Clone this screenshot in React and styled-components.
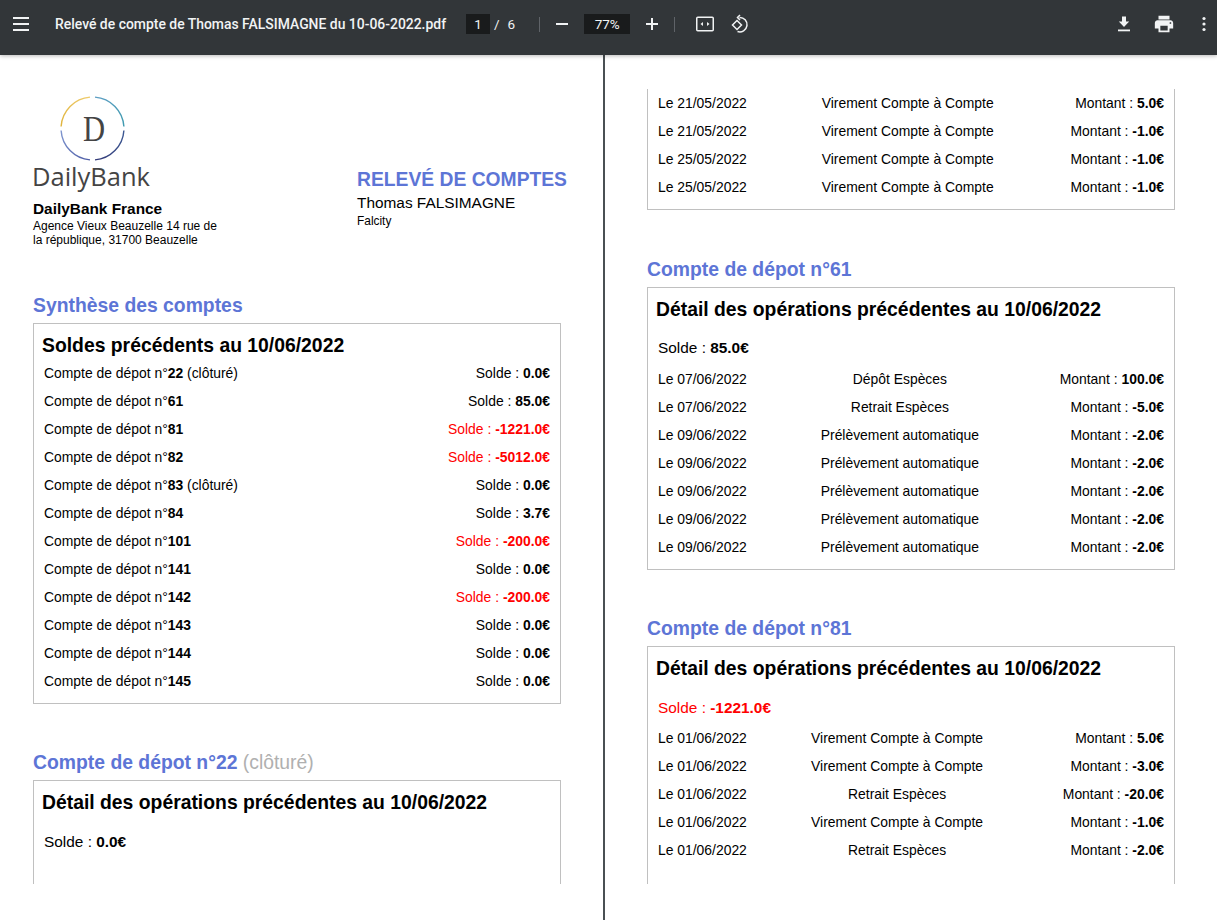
import React from 'react';
import styled, { createGlobalStyle } from 'styled-components';

const GlobalStyle = createGlobalStyle`
    html, body {
        margin: 0;
        padding: 0;
        height: 100%;
        background: #ffffff;
    }
    body {
        font-family: "Liberation Sans", Arial, sans-serif;
        color: #000000;
        overflow: hidden;
    }
`;

const Viewer = styled.div`
    width: 1217px;
    height: 920px;
    display: flex;
    flex-direction: column;
    overflow: hidden;
    background: #ffffff;
`;

const Toolbar = styled.header`
    height: 55px;
    box-sizing: border-box;
    flex: none;
    background: #323639;
    color: #f1f3f4;
    display: flex;
    align-items: center;
    box-shadow: 0 1px 4px rgba(0, 0, 0, 0.28);
    position: relative;
    z-index: 2;
    padding: 0 1px 7px 9px;
`;

const IconButton = styled.div`
    width: 24px;
    height: 32px;
    margin-left: ${(props) => props.left || 0}px;
    flex: none;
    display: flex;
    align-items: center;
    justify-content: center;
    color: #f1f3f4;
`;

const FileName = styled.div`
    margin-left: 22px;
    width: 411px;
    flex: none;
    font-family: Roboto, sans-serif;
    font-size: 13.93px;
    font-weight: 500;
    white-space: nowrap;
`;

const PageInput = styled.div`
    width: 24px;
    height: 20px;
    background: #191b1c;
    font-family: Roboto, sans-serif;
    font-size: 13.5px;
    line-height: 20px;
    text-align: center;
    flex: none;
`;

const Slash = styled.span`
    font-family: Roboto, sans-serif;
    font-size: 13.5px;
    margin-left: 4px;
    flex: none;
`;

const PageCount = styled.span`
    font-family: Roboto, sans-serif;
    font-size: 13.5px;
    margin-left: 8px;
    flex: none;
`;

const Separator = styled.div`
    width: 1px;
    height: 15px;
    background: #5f6368;
    flex: none;
    margin-left: ${(props) => props.left}px;
`;

const ZoomInput = styled.div`
    width: 46px;
    height: 20px;
    margin-left: 10px;
    background: #191b1c;
    font-family: Roboto, sans-serif;
    font-size: 13.5px;
    line-height: 20px;
    text-align: center;
    flex: none;
`;

const Spacer = styled.div`
    flex: 1;
`;

const Pages = styled.main`
    flex: 1;
    display: grid;
    grid-template-columns: 603px 2px 612px;
    min-height: 0;
`;

const Divider = styled.div`
    background: #4a5053;
`;

const Sheet = styled.section`
    height: ${(props) => 829 - props.top}px;
    overflow: hidden;
    padding: ${(props) => props.top}px 42px 0 ${(props) => props.left}px;
`;

const Head = styled.div`
    display: flex;
    justify-content: space-between;
    height: 196px;
`;

const BankBlock = styled.div`
    width: 188px;
`;

const LogoWrap = styled.div`
    width: 120px;
    height: 99px;
    position: relative;
`;

const LogoRing = styled.svg`
    position: absolute;
    left: 0;
    top: 0;
`;

const LogoText = styled.div`
    position: absolute;
    left: -1px;
    top: 62px;
    font-family: "Open Sans", sans-serif;
    font-size: 25.5px;
    line-height: 36px;
    color: #444444;
`;

const LogoLetter = styled.div`
    position: absolute;
    left: 50px;
    top: 15px;
    font-family: "Liberation Serif", serif;
    font-size: 36px;
    line-height: 36px;
    color: #444444;
    transform: scaleX(0.85);
    transform-origin: left center;
`;

const BankName = styled.div`
    font-size: 15.4px;
    font-weight: 700;
    line-height: 16px;
    margin-top: 6px;
`;

const BankAddress = styled.div`
    font-size: 12px;
    line-height: 14px;
    margin-top: 2px;
`;

const ClientBlock = styled.div`
    width: 204px;
    padding-top: 72px;
`;

const ReportTitle = styled.div`
    color: #5d75d6;
    font-size: 19.3px;
    font-weight: 700;
    line-height: 24px;
    white-space: nowrap;
`;

const ClientName = styled.div`
    font-size: 15.4px;
    line-height: 22px;
`;

const ClientCity = styled.div`
    font-size: 11.9px;
    line-height: 14px;
`;

const SectionTitle = styled.h2`
    margin: ${(props) => props.top}px 0 0 0;
    color: #5d75d6;
    font-size: 19.35px;
    font-weight: 700;
    line-height: 26px;
    height: 31px;
    white-space: nowrap;
`;

const Closed = styled.span`
    color: #b0b0b0;
    font-weight: 400;
`;

const Card = styled.div`
    border: 1px solid #c0c0c0;
    border-top: ${(props) => (props.cut ? 'none' : '1px solid #c0c0c0')};
    padding: ${(props) => (props.cut ? '0' : '8px')} 10px ${(props) => (props.open ? 80 : 8)}px 8px;
    width: 528px;
    box-sizing: border-box;
`;

const CardTitle = styled.div`
    font-size: 19.35px;
    font-weight: 700;
    line-height: 26px;
    margin-bottom: 1px;
    white-space: nowrap;
`;

const Balance = styled.div`
    font-size: 15.4px;
    line-height: 20px;
    margin: ${(props) => props.top || 17}px 0 ${(props) => props.bottom || 6}px 2px;
    color: ${(props) => (props.negative ? '#ff0000' : '#000000')};
`;

const Table = styled.table`
    width: calc(100% - 2px);
    margin: ${(props) => (props.cut ? -2 : 0)}px 0 0 2px;
    border-collapse: collapse;
    font-size: 13.9px;
`;

const Row = styled.tr`
    height: 28px;
`;

const Cell = styled.td`
    padding: 0 0 0 ${(props) => props.pad || 0}px;
    text-align: ${(props) => props.align || 'left'};
    white-space: nowrap;
    color: ${(props) => (props.negative ? '#ff0000' : '#000000')};
`;

const Burger = () => (
    <svg width="24" height="24" viewBox="0 0 24 24" fill="currentColor">
        <rect x="4" y="5" width="16" height="2" />
        <rect x="4" y="11" width="16" height="2" />
        <rect x="4" y="17" width="16" height="2" />
    </svg>
);

const Minus = () => (
    <svg width="20" height="20" viewBox="0 0 20 20" fill="currentColor">
        <rect x="4" y="9" width="12" height="2" />
    </svg>
);

const Plus = () => (
    <svg width="20" height="20" viewBox="0 0 20 20" fill="currentColor">
        <path d="M9 4h2v5h5v2h-5v5H9v-5H4V9h5z" />
    </svg>
);

const FitWidth = () => (
    <svg width="20" height="20" viewBox="0 0 20 20" fill="none" stroke="currentColor" strokeWidth="1.5">
        <rect x="1.75" y="3.25" width="16.5" height="13.5" rx="1" />
        <path d="M5.5 10L8 8v4zM14.5 10L12 8v4z" fill="currentColor" stroke="none" />
    </svg>
);

const Rotate = () => (
    <svg width="20" height="20" viewBox="0 0 20 20" fill="none" stroke="currentColor" strokeWidth="1.5">
        <path d="M9.5 3.5a7.2 7.2 0 1 1-2 14" />
        <path d="M10 1L7.5 3.5 10 6" />
        <path d="M7 6.5L2.5 11 7 15.5l4.5-4.5z" />
    </svg>
);

const Download = () => (
    <svg width="20" height="20" viewBox="0 0 20 20" fill="currentColor">
        <path d="M8 2.5h4v5h3.2L10 13 4.8 7.5H8z" />
        <rect x="4" y="15.5" width="12" height="1.8" />
    </svg>
);

const Print = () => (
    <svg width="22" height="22" viewBox="0 0 24 24" fill="currentColor">
        <path d="M19 8H5c-1.66 0-3 1.34-3 3v6h4v4h12v-4h4v-6c0-1.66-1.34-3-3-3zm-3 11H8v-5h8v5zm3-7c-.55 0-1-.45-1-1s.45-1 1-1 1 .45 1 1-.45 1-1 1zm-1-9H6v4h12V3z" />
    </svg>
);

const More = () => (
    <svg width="20" height="20" viewBox="0 0 20 20" fill="currentColor">
        <circle cx="10" cy="4.5" r="1.6" />
        <circle cx="10" cy="10" r="1.6" />
        <circle cx="10" cy="15.5" r="1.6" />
    </svg>
);

// arcs of the ring, going round from the top left
const Logo = () => (
    <LogoWrap>
        <LogoRing width="120" height="70" viewBox="0 0 120 70" fill="none" strokeWidth="1.4">
            <defs>
                <linearGradient id="ringTopLeft" x1="0" y1="1" x2="1" y2="0">
                    <stop offset="0" stopColor="#e0b43c" />
                    <stop offset="1" stopColor="#eecb6c" />
                </linearGradient>
                <linearGradient id="ringTopRight" x1="0" y1="0" x2="1" y2="1">
                    <stop offset="0" stopColor="#5f9fc4" />
                    <stop offset="1" stopColor="#3f9aaf" />
                </linearGradient>
                <linearGradient id="ringBottomRight" x1="1" y1="0" x2="0" y2="1">
                    <stop offset="0" stopColor="#3d5a94" />
                    <stop offset="1" stopColor="#333a78" />
                </linearGradient>
                <linearGradient id="ringBottomLeft" x1="1" y1="1" x2="0" y2="0">
                    <stop offset="0" stopColor="#4d5ca6" />
                    <stop offset="1" stopColor="#7f96cf" />
                </linearGradient>
            </defs>
            <path d="M28.1 30.5 A31.5 31.5 0 0 1 57 1.1" stroke="url(#ringTopLeft)" />
            <path d="M62 1.1 A31.5 31.5 0 0 1 90.9 30.5" stroke="url(#ringTopRight)" />
            <path d="M90.9 34.5 A31.5 31.5 0 0 1 62 63.9" stroke="url(#ringBottomRight)" />
            <path d="M57 63.9 A31.5 31.5 0 0 1 28.1 34.5" stroke="url(#ringBottomLeft)" />
        </LogoRing>
        <LogoLetter>D</LogoLetter>
        <LogoText>DailyBank</LogoText>
    </LogoWrap>
);

const summary = [
    { n: '22', solde: '0.0', closed: true },
    { n: '61', solde: '85.0' },
    { n: '81', solde: '-1221.0', negative: true },
    { n: '82', solde: '-5012.0', negative: true },
    { n: '83', solde: '0.0', closed: true },
    { n: '84', solde: '3.7' },
    { n: '101', solde: '-200.0', negative: true },
    { n: '141', solde: '0.0' },
    { n: '142', solde: '-200.0', negative: true },
    { n: '143', solde: '0.0' },
    { n: '144', solde: '0.0' },
    { n: '145', solde: '0.0' },
];

const V = 'Virement Compte à Compte';
const R = 'Retrait Espèces';
const P = 'Prélèvement automatique';

const ops22 = [
    ['Le 21/05/2022', V, '5.0'],
    ['Le 21/05/2022', V, '-1.0'],
    ['Le 25/05/2022', V, '-1.0'],
    ['Le 25/05/2022', V, '-1.0'],
];

const ops61 = [
    ['Le 07/06/2022', 'Dépôt Espèces', '100.0'],
    ['Le 07/06/2022', R, '-5.0'],
    ['Le 09/06/2022', P, '-2.0'],
    ['Le 09/06/2022', P, '-2.0'],
    ['Le 09/06/2022', P, '-2.0'],
    ['Le 09/06/2022', P, '-2.0'],
    ['Le 09/06/2022', P, '-2.0'],
];

const ops81 = [
    ['Le 01/06/2022', V, '5.0'],
    ['Le 01/06/2022', V, '-3.0'],
    ['Le 01/06/2022', R, '-20.0'],
    ['Le 01/06/2022', V, '-1.0'],
    ['Le 01/06/2022', R, '-2.0'],
];

const Operations = ({ rows, cut, amountPad }) => (
    <Table cut={cut}>
        <tbody>
            {rows.map(([date, label, amount], i) => (
                <Row key={i}>
                    <Cell>{date}</Cell>
                    <Cell align="center">{label}</Cell>
                    <Cell align="right" pad={amountPad}>Montant : <b>{amount}€</b></Cell>
                </Row>
            ))}
        </tbody>
    </Table>
);

const App = () => (
    <Viewer>
        <GlobalStyle />
        <Toolbar>
            <IconButton><Burger /></IconButton>
            <FileName>Relevé de compte de Thomas FALSIMAGNE du 10-06-2022.pdf</FileName>
            <PageInput>1</PageInput>
            <Slash>/</Slash>
            <PageCount>6</PageCount>
            <Separator left={24} />
            <IconButton left={10}><Minus /></IconButton>
            <ZoomInput>77%</ZoomInput>
            <IconButton left={10}><Plus /></IconButton>
            <Separator left={10} />
            <IconButton left={18}><FitWidth /></IconButton>
            <IconButton left={11}><Rotate /></IconButton>
            <Spacer />
            <IconButton><Download /></IconButton>
            <IconButton left={16}><Print /></IconButton>
            <IconButton left={16}><More /></IconButton>
        </Toolbar>
        <Pages>
            <Sheet top={41} left={33}>
                <Head>
                    <BankBlock>
                        <Logo />
                        <BankName>DailyBank France</BankName>
                        <BankAddress>Agence Vieux Beauzelle 14 rue de la république, 31700 Beauzelle</BankAddress>
                    </BankBlock>
                    <ClientBlock>
                        <ReportTitle>RELEVÉ DE COMPTES</ReportTitle>
                        <ClientName>Thomas FALSIMAGNE</ClientName>
                        <ClientCity>Falcity</ClientCity>
                    </ClientBlock>
                </Head>
                <SectionTitle top={0}>Synthèse des comptes</SectionTitle>
                <Card>
                    <CardTitle>Soldes précédents au 10/06/2022</CardTitle>
                    <Table>
                        <tbody>
                            {summary.map((row) => (
                                <Row key={row.n}>
                                    <Cell>
                                        Compte de dépot n°<b>{row.n}</b>{row.closed && ' (clôturé)'}
                                    </Cell>
                                    <Cell align="right" negative={row.negative}>
                                        Solde : <b>{row.solde}€</b>
                                    </Cell>
                                </Row>
                            ))}
                        </tbody>
                    </Table>
                </Card>
                <SectionTitle top={45}>Compte de dépot n°22 <Closed>(clôturé)</Closed></SectionTitle>
                <Card open>
                    <CardTitle>Détail des opérations précédentes au 10/06/2022</CardTitle>
                    <Balance>Solde : <b>0.0€</b></Balance>
                </Card>
            </Sheet>
            <Divider />
            <Sheet top={36} left={42}>
                <Card cut>
                    <Operations rows={ops22} cut />
                </Card>
                <SectionTitle top={46}>Compte de dépot n°61</SectionTitle>
                <Card>
                    <CardTitle>Détail des opérations précédentes au 10/06/2022</CardTitle>
                    <Balance top={16} bottom={7}>Solde : <b>85.0€</b></Balance>
                    <Operations rows={ops61} />
                </Card>
                <SectionTitle top={45}>Compte de dépot n°81</SectionTitle>
                <Card open>
                    <CardTitle>Détail des opérations précédentes au 10/06/2022</CardTitle>
                    <Balance negative>Solde : <b>-1221.0€</b></Balance>
                    <Operations rows={ops81} amountPad={8} />
                </Card>
            </Sheet>
        </Pages>
    </Viewer>
);

export default App;
